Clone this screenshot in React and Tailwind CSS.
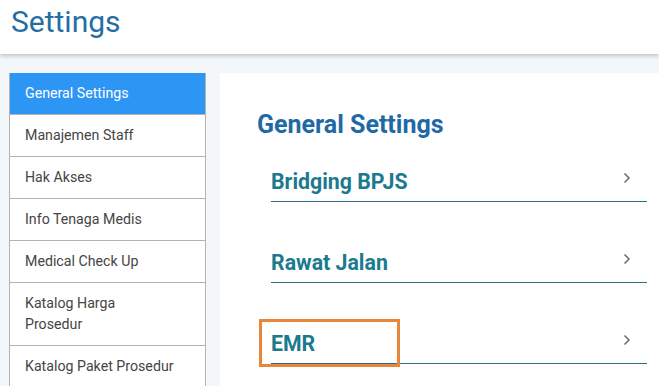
import React from 'react';

const menu = [
  'General Settings',
  'Manajemen Staff',
  'Hak Akses',
  'Info Tenaga Medis',
  'Medical Check Up',
  ['Katalog Harga', 'Prosedur'],
  'Katalog Paket Prosedur',
];

const sections = ['Bridging BPJS', 'Rawat Jalan', 'EMR'];

const Chevron = () => (
  <svg width="8" height="12" viewBox="0 0 8 12" fill="none">
    <polyline points="1.5,1.5 6,6 1.5,10.5" stroke="#6b6b6b" strokeWidth="1.5" />
  </svg>
);

const App = () => {
  return (
    <div className="h-[386px] bg-[#f4f7f9] font-['Roboto',sans-serif] overflow-hidden">
      {/* Header */}
      <header className="h-[54px] bg-white px-[11px] shadow-[0_2px_4px_rgba(0,0,0,0.22)] relative z-10">
        <h1 className="text-[30px] leading-[44px] text-[#246ea3]">Settings</h1>
      </header>

      <div className="flex gap-[14px] pl-[9px] pt-[19px]">
        {/* Sidebar */}
        <nav className="w-[197px] shrink-0 bg-white border-x border-[#b3b3b3]">
          {menu.map((item, i) => (
            <div
              key={i}
              className={
                i === 0
                  ? 'bg-[#2d95f4] text-white text-[14.2px] leading-[21px] px-[15px] py-[10px] border-b border-[#b3b3b3]'
                  : 'text-[#454545] text-[14.2px] leading-[21px] px-[15px] py-[10px] border-b border-[#b3b3b3]'
              }
            >
              {Array.isArray(item) ? (
                <>
                  {item[0]}
                  <br />
                  {item[1]}
                </>
              ) : (
                item
              )}
            </div>
          ))}
        </nav>

        {/* Main panel */}
        <main className="flex-1 bg-white pl-[37px] pr-[12px] pt-[36px] min-h-[320px]">
          <h2 className="text-[25px] leading-[32px] font-bold text-[#1f6aa5]">General Settings</h2>
          <div className="ml-[14px] mt-[27px]">
            {sections.map((s) => (
              <div key={s} className="relative mb-[47px]">
                <div className="flex items-center justify-between pb-[5px] border-b border-[#2f6d84]">
                  <span className="text-[21.3px] leading-[28px] font-bold text-[#1b7a8e]">{s}</span>
                  <span className="mr-[16px] -mt-[8px]">
                    <Chevron />
                  </span>
                </div>
                {s === 'EMR' && (
                  <div className="absolute left-[-12px] top-[-11px] w-[141px] h-[48px] border-[3px] border-[#e8873a]" />
                )}
              </div>
            ))}
          </div>
        </main>
      </div>
    </div>
  );
};

export default App;
